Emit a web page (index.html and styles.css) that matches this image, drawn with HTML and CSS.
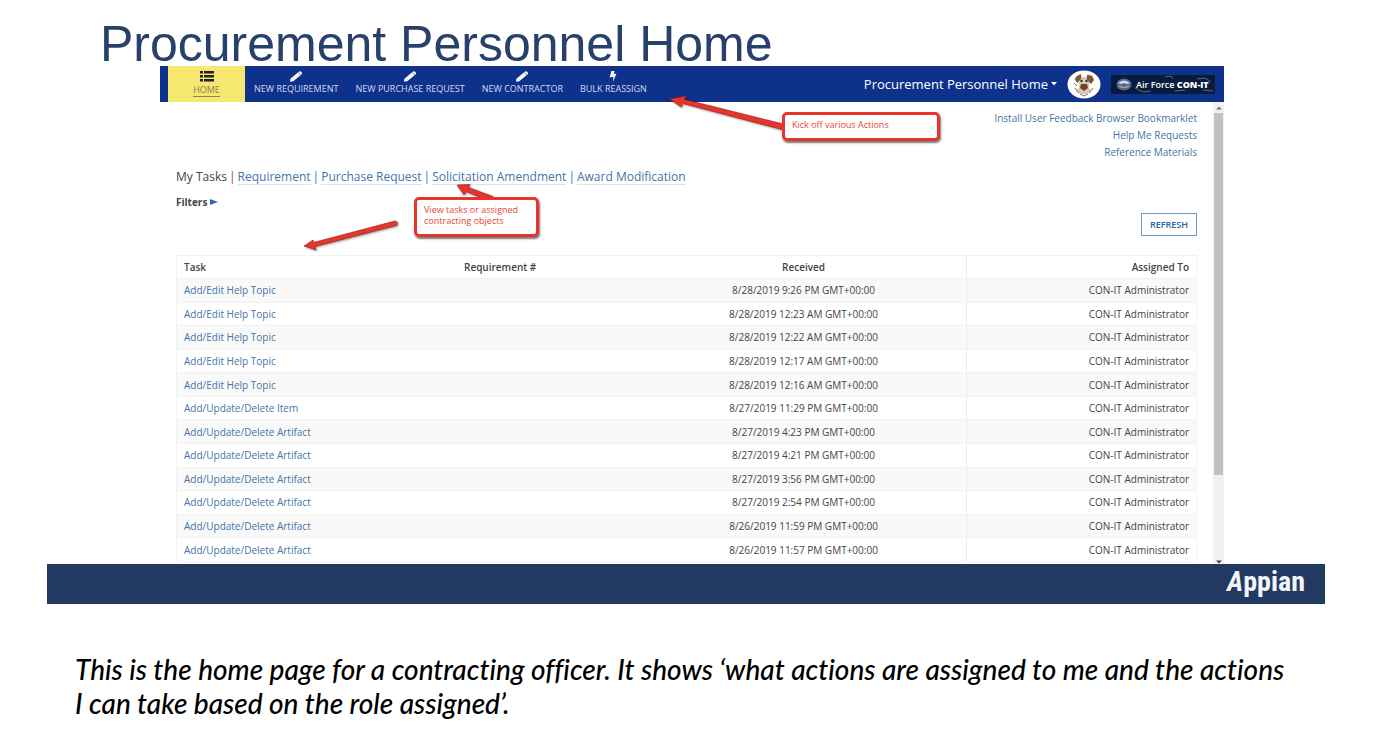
FILE: index.html
```html
<!DOCTYPE html>
<html lang="en">
<head>
<meta charset="utf-8">
<title>Procurement Personnel Home</title>
<link rel="stylesheet" href="styles.css">
</head>
<body>
<main class="page">
  <section class="slide">
    <h1 class="slide-title">Procurement Personnel Home</h1>
    <div class="app">
      <header class="app-bar">
        <nav class="nav">
          <a class="nav-item active" href="#home">
            <svg class="nav-icon" viewBox="0 0 14 11"><path d="M0 0h3v2.6H0zM4 0h10v2.6H4zM0 4h3v2.6H0zM4 4h10v2.6H4zM0 8h3v2.6H0zM4 8h10v2.6H4z" fill="#222"/></svg>
            <span>HOME</span>
          </a>
          <a class="nav-item" href="#requirement">
            <svg class="nav-icon" viewBox="0 0 14 11"><path d="M1 10.8 1.4 7.8 9.7.7Q10.600 0 11.700.6L12.700 1.500Q13.500 2.500 12.500 3.400L4.300 10.300Z" fill="#f4f6fa"/><path d="m9 1.500 3.100 2.500" stroke="#0e318b" stroke-width=".5"/></svg>
            <span>NEW REQUIREMENT</span>
          </a>
          <a class="nav-item" href="#purchase">
            <svg class="nav-icon" viewBox="0 0 14 11"><path d="M1 10.8 1.4 7.8 9.7.7Q10.600 0 11.700.6L12.700 1.500Q13.500 2.500 12.500 3.400L4.300 10.300Z" fill="#f4f6fa"/><path d="m9 1.500 3.100 2.500" stroke="#0e318b" stroke-width=".5"/></svg>
            <span>NEW PURCHASE REQUEST</span>
          </a>
          <a class="nav-item" href="#contractor">
            <svg class="nav-icon" viewBox="0 0 14 11"><path d="M1 10.8 1.4 7.8 9.7.7Q10.600 0 11.700.6L12.700 1.500Q13.500 2.500 12.500 3.400L4.300 10.300Z" fill="#f4f6fa"/><path d="m9 1.500 3.100 2.500" stroke="#0e318b" stroke-width=".5"/></svg>
            <span>NEW CONTRACTOR</span>
          </a>
          <a class="nav-item" href="#reassign">
            <svg class="nav-icon" viewBox="0 0 14 11"><path d="M5.200 0h3.400l-.8 3 2.700-.4L6.900 11l.5-5.200-3.700.8z" fill="#f4f6fa"/></svg>
            <span>BULK REASSIGN</span>
          </a>
        </nav>
        <div class="account">
          <button class="site-menu" type="button">Procurement Personnel Home
            <svg class="caret" viewBox="0 0 6 4"><path d="M0 0h6L3 3.500z" fill="#fff"/></svg>
          </button>
          <svg class="avatar" viewBox="0 0 34 29">
            <ellipse cx="17" cy="14.500" rx="16.500" ry="14" fill="#fff"/>
            <path d="M10 6 14 4 15 7 19 7 21 4 25 5 27 10 24 14 22 12 22 18 24 21 20 24 13 24 9 21 12 18 12 13 9 12 7 9z" fill="#d8cbb8"/>
            <path d="m10 6 4-2v5l-4 4-2-4zM20 5l5 1 2 4-3 4-4-4z" fill="#7c5a35"/>
            <path d="M14 14h6l1 4-4 3-4-3z" fill="#6b4524"/>
            <circle cx="14.500" cy="11" r="1.200" fill="#333"/><circle cx="19.500" cy="11" r="1.200" fill="#333"/>
            <path d="m8 18 4 5m14-5-4 5m-9 1 4 2 4-2M7 13l3 3" stroke="#8b6b49" fill="none"/>
          </svg>
          <div class="brand">
            <svg class="brand-web" viewBox="0 0 104 19" preserveAspectRatio="none"><path d="M24 13l8 4 8-1M54 2l6-1 2 3M86 4l8-1 6 4M64 16l10-1M92 15l10 1" stroke="#6f8298" stroke-width=".8" fill="none"/></svg>
            <svg class="brand-seal" viewBox="0 0 16 13"><ellipse cx="8" cy="6.500" rx="7.500" ry="6" fill="#56659b"/><path d="M2 5q6-5 12 0l-3 1-3-1-3 1z" fill="#d9dce4"/><path d="M3 8q5 3 10 0" stroke="#c6ae65" stroke-width="1.200" fill="none"/></svg>
            <span>Air Force <b>CON-IT</b></span>
          </div>
        </div>
      </header>

      <div class="app-body">
        <div class="content">
          <ul class="help-links">
            <li><a href="#bookmarklet">Install User Feedback Browser Bookmarklet</a></li>
            <li><a href="#help">Help Me Requests</a></li>
            <li><a href="#reference">Reference Materials</a></li>
          </ul>
          <nav class="tabs">
            <span>My Tasks</span><i class="first">|</i><a href="#r">Requirement</a><i>|</i><a href="#p">Purchase Request</a><i>|</i><a href="#s">Solicitation Amendment</a><i>|</i><a href="#a">Award Modification</a>
          </nav>
          <button class="filters" type="button">Filters <svg class="filter-arrow" viewBox="0 0 8 6"><path d="M0 0l8 3-8 3z" fill="#2a6cab"/></svg></button>
          <div class="toolbar"><button class="refresh" type="button">REFRESH</button></div>
          <table class="tasks">
            <thead><tr><th class="c-task">Task</th><th class="c-req">Requirement #</th><th class="c-date">Received</th><th class="c-who">Assigned To</th></tr></thead>
            <tbody>
              <tr><td><a href="#t">Add/Edit Help Topic</a></td><td></td><td>8/28/2019 9:26 PM GMT+00:00</td><td>CON-IT Administrator</td></tr>
              <tr><td><a href="#t">Add/Edit Help Topic</a></td><td></td><td>8/28/2019 12:23 AM GMT+00:00</td><td>CON-IT Administrator</td></tr>
              <tr><td><a href="#t">Add/Edit Help Topic</a></td><td></td><td>8/28/2019 12:22 AM GMT+00:00</td><td>CON-IT Administrator</td></tr>
              <tr><td><a href="#t">Add/Edit Help Topic</a></td><td></td><td>8/28/2019 12:17 AM GMT+00:00</td><td>CON-IT Administrator</td></tr>
              <tr><td><a href="#t">Add/Edit Help Topic</a></td><td></td><td>8/28/2019 12:16 AM GMT+00:00</td><td>CON-IT Administrator</td></tr>
              <tr><td><a href="#t">Add/Update/Delete Item</a></td><td></td><td>8/27/2019 11:29 PM GMT+00:00</td><td>CON-IT Administrator</td></tr>
              <tr><td><a href="#t">Add/Update/Delete Artifact</a></td><td></td><td>8/27/2019 4:23 PM GMT+00:00</td><td>CON-IT Administrator</td></tr>
              <tr><td><a href="#t">Add/Update/Delete Artifact</a></td><td></td><td>8/27/2019 4:21 PM GMT+00:00</td><td>CON-IT Administrator</td></tr>
              <tr><td><a href="#t">Add/Update/Delete Artifact</a></td><td></td><td>8/27/2019 3:56 PM GMT+00:00</td><td>CON-IT Administrator</td></tr>
              <tr><td><a href="#t">Add/Update/Delete Artifact</a></td><td></td><td>8/27/2019 2:54 PM GMT+00:00</td><td>CON-IT Administrator</td></tr>
              <tr><td><a href="#t">Add/Update/Delete Artifact</a></td><td></td><td>8/26/2019 11:59 PM GMT+00:00</td><td>CON-IT Administrator</td></tr>
              <tr><td><a href="#t">Add/Update/Delete Artifact</a></td><td></td><td>8/26/2019 11:57 PM GMT+00:00</td><td>CON-IT Administrator</td></tr>
            </tbody>
          </table>
        </div>
        <div class="scrollbar">
          <svg class="scroll-arrow" viewBox="0 0 6 4"><path d="M0 3.500h6L3 .5z" fill="#777"/></svg>
          <div class="thumb"></div>
          <svg class="scroll-arrow" viewBox="0 0 6 4"><path d="M0 .5h6L3 3.500z" fill="#444"/></svg>
        </div>
      </div>

      <!-- Annotation arrows, drawn in the app frame's coordinates -->
      <svg class="arrows" width="800" height="220" viewBox="0 0 800 220">
        <g fill="#e8342a" stroke="#8d1d17" stroke-width=".6" stroke-linejoin="round">
          <path d="M510 33 526 30 524.500 33.500 625 58.500 623.500 64 523 37.500 521 41z"/>
          <path d="M297 119 310 118.500 308.500 121.500 333 130.500 330 135.500 306 125.500 304 129z"/>
          <path d="M144 180 153 174 153.500 176.500 235 155Q239 156 236.500 159.500L155 180.500 156 184z"/>
        </g>
      </svg>
      <div class="callout callout-actions">Kick off various Actions</div>
      <div class="callout callout-tasks">View tasks or assigned contracting objects</div>
    </div>
    <footer class="slide-footer"><span class="wordmark"><em>A</em>ppian</span></footer>
  </section>
  <p class="caption">This is the home page for a contracting officer. It shows ‘what actions are assigned to me and the actions I can take based on the role assigned’.</p>
</main>
</body>
</html>
```
FILE: styles.css
```css
* { box-sizing: border-box; }
body { margin: 0; background: #fff; font-family: "Open Sans", sans-serif; color: #444; }
a { color: #4474a8; text-decoration: none; }
button { font: inherit; border: 0; background: none; padding: 0; color: inherit; }

.page { padding: 22px 69px 24px 47px; }
.slide-title { margin: 0 0 0 53px; font: 400 50px/44px "Liberation Sans", sans-serif; color: #27416b; }

.app { position: relative; margin: 0 101px 0 113px; font-size: 10px; }
.app-bar { display: flex; justify-content: space-between; height: 36px; padding: 0 9px 0 8px; background: #0e318b; color: #fff; }
.nav { display: flex; gap: 1px; }
.nav-item { display: flex; flex-direction: column; align-items: center; gap: 1px; padding: 5px 8px 0; color: #d3dbef; font-size: 9px; line-height: 12px; }
.nav-item.active { width: 77px; background: #f5e76f; color: #8c8545; }
.nav-item.active span { border-bottom: 1px solid #8c8545; line-height: 13px; }
.nav-icon { width: 14px; height: 11px; }
.account { display: flex; align-items: center; gap: 10px; }
.site-menu { display: flex; align-items: center; gap: 3px; font-size: 13px; font-weight: 500; }
.caret { width: 6px; height: 4px; }
.avatar { width: 34px; height: 29px; }
.brand { position: relative; display: flex; align-items: center; gap: 4px; width: 104px; height: 19px; padding-left: 5px; background: #071b3c; font-size: 9px; font-weight: 600; white-space: nowrap; }
.brand-web { position: absolute; inset: 0; width: 100%; height: 100%; }
.brand-seal { width: 16px; height: 13px; }
.brand span { position: relative; }

.app-body { display: flex; }
.content { flex: 1; padding: 8px 16px 2px; }
.help-links { margin: 0; padding: 0; list-style: none; text-align: right; line-height: 17px; }
.tabs { display: flex; gap: 2px; margin-top: 8px; font-size: 12px; line-height: 15px; }
.tabs a { border-bottom: 1px solid #dce4ec; }
.tabs i { font-style: normal; color: #4474a8; }
.tabs .first { color: #a04040; }
.filters { display: flex; align-items: center; gap: 3px; margin-top: 9px; font-weight: 700; line-height: 16px; }
.filter-arrow { width: 8px; height: 6px; }
.toolbar { display: flex; justify-content: flex-end; padding: 3px 0 19px; }
.refresh { height: 23px; padding: 0 8px; border: 1px solid #6f9bc9; color: #2a62a0; font-size: 9px; font-weight: 600; }

.tasks { width: 100%; height: 307px; table-layout: fixed; border-collapse: collapse; line-height: 16px; border: 1px solid #f2f2f2; }
.tasks th, .tasks td { padding: 2px 7px; text-align: left; white-space: nowrap; }
.tasks th { padding: 3px 7px; font-weight: 600; }
.tasks .c-task { width: 27.5%; }
.tasks .c-req { width: 18%; }
.tasks .c-date { width: 32%; }
.tasks th:nth-child(3), .tasks td:nth-child(3) { text-align: center; }
.tasks th:nth-child(4), .tasks td:nth-child(4) { text-align: right; border-left: 1px solid #ececec; }
.tasks tbody tr { border-top: 1px solid #f2f2f2; }
.tasks tbody tr:nth-child(odd) { background: #f9f9f9; }

.scrollbar { display: flex; flex-direction: column; align-items: center; gap: 3px; width: 11px; padding: 4px 0 0; background: #f1f1f1; }
.scroll-arrow { width: 6px; height: 4px; }
.thumb { width: 9px; flex: 0 0 79%; background: #c1c1c1; }
.thumb + .scroll-arrow { margin-top: auto; }

.arrows { position: absolute; left: 0; top: 0; filter: drop-shadow(1px 1px 1px #0006); }
.callout { position: absolute; padding: 4px 7px; border: 3px solid #e8342a; border-radius: 5px; background: #fff; color: #e8443a; font-size: 9px; line-height: 11px; box-shadow: 1px 2px 2px #0008; }
.callout-actions { left: 622px; top: 46px; width: 158px; height: 29px; }
.callout-tasks { left: 254px; top: 131px; width: 125px; height: 40px; }

.slide-footer { display: flex; justify-content: flex-end; height: 40px; padding-right: 20px; background: #233a60; color: #f2f5f9; }
.wordmark { font: 700 28px/36px "Roboto Condensed", Roboto, sans-serif; }
.caption { margin: 48px 30px 0 28px; font: italic 500 28px/34px Lato, sans-serif; font-variant-ligatures: none; color: #000; }
```
